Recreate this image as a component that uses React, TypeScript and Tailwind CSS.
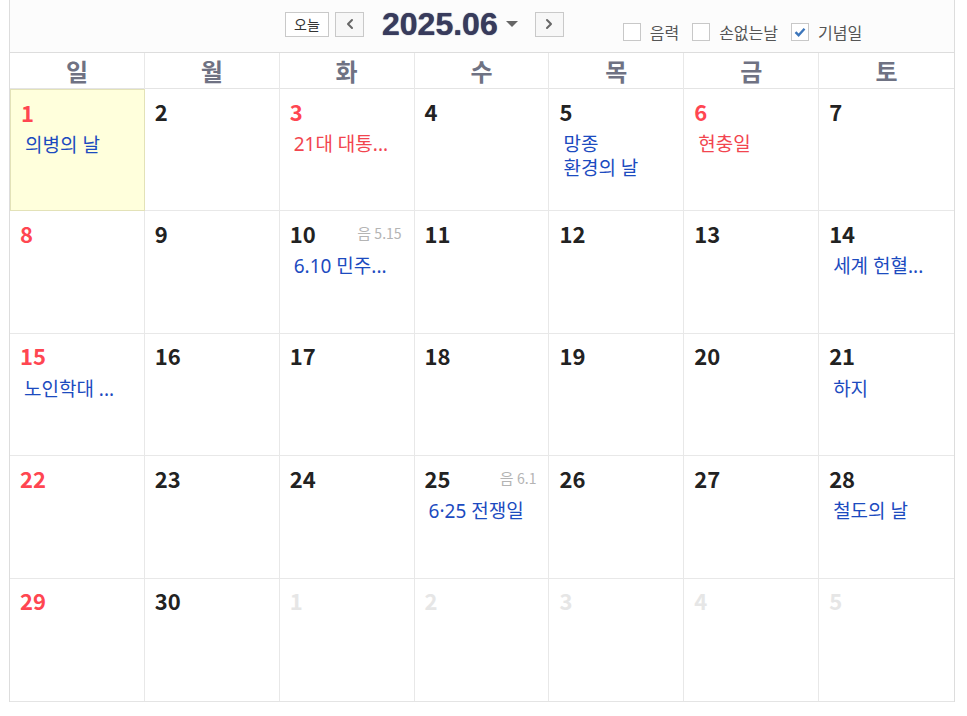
import { ChevronLeft, ChevronRight } from 'lucide-react';

type Day = {
  n: number;
  muted?: boolean;
  red?: boolean;
  today?: boolean;
  lunar?: string;
  events?: { text: string; red?: boolean }[];
};

const weekdays = ['일', '월', '화', '수', '목', '금', '토'];

const days: Day[] = [
  { n: 1, red: true, today: true, events: [{ text: '의병의 날' }] },
  { n: 2 },
  { n: 3, red: true, events: [{ text: '21대 대통...', red: true }] },
  { n: 4 },
  { n: 5, events: [{ text: '망종' }, { text: '환경의 날' }] },
  { n: 6, red: true, events: [{ text: '현충일', red: true }] },
  { n: 7 },
  { n: 8, red: true },
  { n: 9 },
  { n: 10, lunar: '5.15', events: [{ text: '6.10 민주...' }] },
  { n: 11 },
  { n: 12 },
  { n: 13 },
  { n: 14, events: [{ text: '세계 헌혈...' }] },
  { n: 15, red: true, events: [{ text: '노인학대 ...' }] },
  { n: 16 },
  { n: 17 },
  { n: 18 },
  { n: 19 },
  { n: 20 },
  { n: 21, events: [{ text: '하지' }] },
  { n: 22, red: true },
  { n: 23 },
  { n: 24 },
  { n: 25, lunar: '6.1', events: [{ text: '6·25 전쟁일' }] },
  { n: 26 },
  { n: 27 },
  { n: 28, events: [{ text: '철도의 날' }] },
  { n: 29, red: true },
  { n: 30 },
  { n: 1, muted: true },
  { n: 2, muted: true },
  { n: 3, muted: true },
  { n: 4, muted: true },
  { n: 5, muted: true },
];

function Check({ checked, label }: { checked?: boolean; label: string }) {
  return (
    <label className="flex items-center gap-[9px]">
      <span className="w-[18px] h-[18px] border border-[#c8c8c8] bg-white flex items-center justify-center">
        {checked && (
          <svg width="12" height="10" viewBox="0 0 12 10">
            <path d="M1.5 5.2 L4.6 8.2 L10.5 1.8" fill="none" stroke="#3d76bb" strokeWidth="2.4" />
          </svg>
        )}
      </span>
      <span className="text-[16px] text-[#555]">{label}</span>
    </label>
  );
}

export default function App() {
  const font = { fontFamily: '"Noto Sans CJK KR", "Noto Sans", sans-serif' };
  const eventFont = { fontFamily: '"Noto Sans", "Noto Sans CJK KR", sans-serif' };
  return (
    <div className="w-[967px] h-[716px] bg-white" style={font}>
      <div className="ml-[9px] w-[946px] border-x border-[#dddddd]">
        {/* toolbar */}
        <div className="h-[53px] bg-[#fcfcfc] border-b border-[#dddddd] flex items-start">
          <div className="flex items-center ml-[275px] mt-[8px]">
            <button className="w-[44px] h-[25px] border border-[#c9c9c9] bg-white text-[14px] text-[#333] leading-none">
              오늘
            </button>
            <button className="ml-[6px] w-[29px] h-[25px] border border-[#c9c9c9] bg-[#f7f7f7] flex items-center justify-center text-[#666]">
              <ChevronLeft size={16} strokeWidth={3} />
            </button>
            <span
              className="ml-[18px] text-[32px] font-bold text-[#383b5c] leading-none"
              style={{ fontFamily: '"Liberation Sans", Arial, sans-serif', textShadow: '0 0 1px #383b5c' }}
            >
              2025.06
            </span>
            <span className="ml-[8px] w-0 h-0 border-x-[6px] border-x-transparent border-t-[6px] border-t-[#666]" />
            <button className="ml-[17px] w-[29px] h-[25px] border border-[#c9c9c9] bg-[#f7f7f7] flex items-center justify-center text-[#666]">
              <ChevronRight size={16} strokeWidth={3} />
            </button>
          </div>
          <div className="flex items-center gap-[13px] ml-[59px] mt-[20px]">
            <Check label="음력" />
            <Check label="손없는날" />
            <Check checked label="기념일" />
          </div>
        </div>

        {/* weekday header */}
        <div className="grid grid-cols-7 h-[36px] border-b border-[#e4e4e4]">
          {weekdays.map((w, i) => (
            <div
              key={w}
              className={`flex items-center justify-center text-[24px] font-bold text-[#6f7283] ${i < 6 ? 'border-r border-[#e8e8e8]' : ''}`}
            >
              {w}
            </div>
          ))}
        </div>

        {/* days */}
        <div className="grid grid-cols-7 grid-rows-5 h-[613px] border-b border-[#e4e4e4]">
          {days.map((d, i) => (
            <div
              key={i}
              className={`pl-[10px] pr-[12px] pt-[8px] ${i % 7 < 6 ? 'border-r' : ''} ${i < 28 ? 'border-b' : ''} ${
                d.today ? 'bg-[#ffffdc] border border-[#e3e2b8]' : 'border-[#e8e8e8]'
              }`}
            >
              <div className="flex items-center justify-between h-[28px]">
                <span
                  className={`text-[22px] font-bold ${
                    d.muted ? 'text-[#e6e6e6]' : d.red ? 'text-[#ff4651]' : 'text-[#222]'
                  }`}
                >
                  {d.n}
                </span>
                {d.lunar && (
                  <span className="text-[15px] text-[#b4b4b4]">
                    음 <span className="text-[14px]">{d.lunar}</span>
                  </span>
                )}
              </div>
              <div className="mt-[7px] pl-[4px]" style={eventFont}>
                {d.events?.map((e) => (
                  <div
                    key={e.text}
                    className={`text-[19px] leading-[24px] whitespace-nowrap ${e.red ? 'text-[#f2454f]' : 'text-[#1c4bbf]'}`}
                  >
                    {e.text}
                  </div>
                ))}
              </div>
            </div>
          ))}
        </div>
      </div>
    </div>
  );
}
